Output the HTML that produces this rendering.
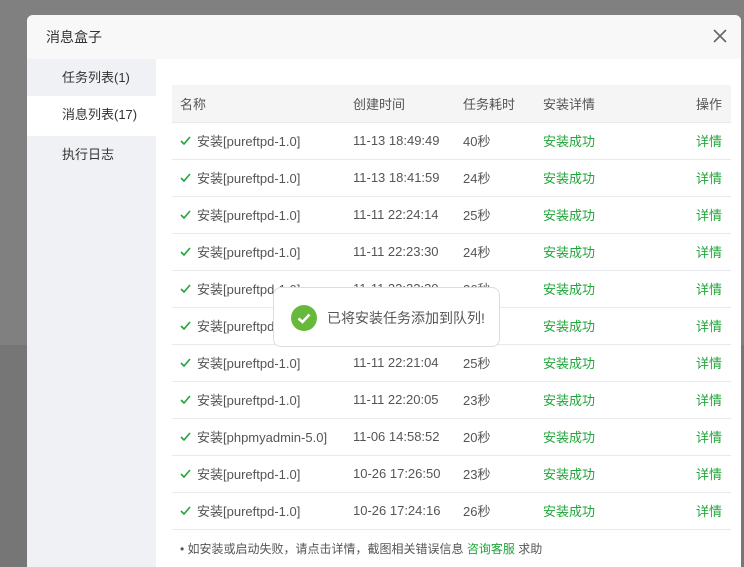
<!DOCTYPE html>
<html><head><meta charset="utf-8"><style>
*{margin:0;padding:0;box-sizing:border-box}
html,body{width:744px;height:567px;overflow:hidden}
body{background:#808080;font-family:"Liberation Sans","Noto Sans CJK SC",sans-serif;position:relative}
.bg2{position:absolute;left:0;top:345px;width:744px;height:222px;background:#767676}
.dlg{position:absolute;left:27px;top:15px;width:714px;height:552px;background:#fff;border-radius:6px 6px 0 0;overflow:hidden}
.hd{height:44px;background:#f8f8f8;font-size:14px;color:#333;line-height:44px;padding-left:19px}
.x{position:absolute;right:13px;top:13px;width:16px;height:16px}
.side{position:absolute;left:0;top:44px;width:129px;height:508px;background:#f0f1f5}
.side div{height:40px;line-height:38px;padding-left:35px;font-size:13px;color:#333}
.side div:first-child{height:37px;line-height:37px}
.side .on{background:#fff}
table{position:absolute;left:145px;top:70px;width:559px;border-collapse:collapse;font-size:13px;color:#555}
th{height:37px;background:#f5f5f5;font-weight:normal;text-align:left;color:#555;border-bottom:1px solid #e8e9ee}
td{height:37px;border-bottom:1px solid #e8e9ee}
.g{color:#20a53a}
.ok{display:inline-block;width:11px;height:9px;margin-right:6px;vertical-align:1px}
.ft{position:absolute;left:153px;top:525px;font-size:12px;color:#555}
.toast{position:absolute;left:273px;top:287px;width:227px;height:60px;background:#fff;border:1px solid #ddd;border-radius:8px;font-size:14px;color:#555}
.toast .c{position:absolute;left:17px;top:17px;width:26px;height:26px;border-radius:50%;background:#67b93b}
.toast span{position:absolute;left:53px;top:20px}
</style></head><body>
<div class="bg2"></div>
<div class="dlg">
<div class="hd">消息盒子</div>
<svg class="x" viewBox="0 0 16 16"><path d="M2 2L14 14M14 2L2 14" stroke="#666" stroke-width="1.6"/></svg>
<div class="side"><div>任务列表(1)</div><div class="on">消息列表(17)</div><div>执行日志</div></div>
<table>
<tr><th style="padding-left:8px;width:181px">名称</th><th style="width:110px">创建时间</th><th style="width:80px">任务耗时</th><th>安装详情</th><th style="text-align:right;padding-right:9px">操作</th></tr>
<tr><td style="padding-left:8px"><svg class="ok" viewBox="0 0 11 9"><path d="M1 5L4 8L10 1" stroke="#20a53a" stroke-width="1.6" fill="none"/></svg>安装[pureftpd-1.0]</td><td>11-13 18:49:49</td><td>40秒</td><td class="g">安装成功</td><td class="g" style="text-align:right;padding-right:9px">详情</td></tr>
<tr><td style="padding-left:8px"><svg class="ok" viewBox="0 0 11 9"><path d="M1 5L4 8L10 1" stroke="#20a53a" stroke-width="1.6" fill="none"/></svg>安装[pureftpd-1.0]</td><td>11-13 18:41:59</td><td>24秒</td><td class="g">安装成功</td><td class="g" style="text-align:right;padding-right:9px">详情</td></tr>
<tr><td style="padding-left:8px"><svg class="ok" viewBox="0 0 11 9"><path d="M1 5L4 8L10 1" stroke="#20a53a" stroke-width="1.6" fill="none"/></svg>安装[pureftpd-1.0]</td><td>11-11 22:24:14</td><td>25秒</td><td class="g">安装成功</td><td class="g" style="text-align:right;padding-right:9px">详情</td></tr>
<tr><td style="padding-left:8px"><svg class="ok" viewBox="0 0 11 9"><path d="M1 5L4 8L10 1" stroke="#20a53a" stroke-width="1.6" fill="none"/></svg>安装[pureftpd-1.0]</td><td>11-11 22:23:30</td><td>24秒</td><td class="g">安装成功</td><td class="g" style="text-align:right;padding-right:9px">详情</td></tr>
<tr><td style="padding-left:8px"><svg class="ok" viewBox="0 0 11 9"><path d="M1 5L4 8L10 1" stroke="#20a53a" stroke-width="1.6" fill="none"/></svg>安装[pureftpd-1.0]</td><td>11-11 22:22:30</td><td>26秒</td><td class="g">安装成功</td><td class="g" style="text-align:right;padding-right:9px">详情</td></tr>
<tr><td style="padding-left:8px"><svg class="ok" viewBox="0 0 11 9"><path d="M1 5L4 8L10 1" stroke="#20a53a" stroke-width="1.6" fill="none"/></svg>安装[pureftpd-1.0]</td><td>11-11 22:21:50</td><td>25秒</td><td class="g">安装成功</td><td class="g" style="text-align:right;padding-right:9px">详情</td></tr>
<tr><td style="padding-left:8px"><svg class="ok" viewBox="0 0 11 9"><path d="M1 5L4 8L10 1" stroke="#20a53a" stroke-width="1.6" fill="none"/></svg>安装[pureftpd-1.0]</td><td>11-11 22:21:04</td><td>25秒</td><td class="g">安装成功</td><td class="g" style="text-align:right;padding-right:9px">详情</td></tr>
<tr><td style="padding-left:8px"><svg class="ok" viewBox="0 0 11 9"><path d="M1 5L4 8L10 1" stroke="#20a53a" stroke-width="1.6" fill="none"/></svg>安装[pureftpd-1.0]</td><td>11-11 22:20:05</td><td>23秒</td><td class="g">安装成功</td><td class="g" style="text-align:right;padding-right:9px">详情</td></tr>
<tr><td style="padding-left:8px"><svg class="ok" viewBox="0 0 11 9"><path d="M1 5L4 8L10 1" stroke="#20a53a" stroke-width="1.6" fill="none"/></svg>安装[phpmyadmin-5.0]</td><td>11-06 14:58:52</td><td>20秒</td><td class="g">安装成功</td><td class="g" style="text-align:right;padding-right:9px">详情</td></tr>
<tr><td style="padding-left:8px"><svg class="ok" viewBox="0 0 11 9"><path d="M1 5L4 8L10 1" stroke="#20a53a" stroke-width="1.6" fill="none"/></svg>安装[pureftpd-1.0]</td><td>10-26 17:26:50</td><td>23秒</td><td class="g">安装成功</td><td class="g" style="text-align:right;padding-right:9px">详情</td></tr>
<tr><td style="padding-left:8px"><svg class="ok" viewBox="0 0 11 9"><path d="M1 5L4 8L10 1" stroke="#20a53a" stroke-width="1.6" fill="none"/></svg>安装[pureftpd-1.0]</td><td>10-26 17:24:16</td><td>26秒</td><td class="g">安装成功</td><td class="g" style="text-align:right;padding-right:9px">详情</td></tr>
</table>
<div class="ft">• 如安装或启动失败，请点击详情，截图相关错误信息 <span class="g">咨询客服</span> 求助</div>
</div>
<div class="toast"><div class="c"><svg width="26" height="26" viewBox="0 0 26 26"><path d="M7.5 13.5L11.5 17L18.5 9.5" stroke="#fff" stroke-width="2.6" fill="none"/></svg></div><span>已将安装任务添加到队列!</span></div>
</body></html>
